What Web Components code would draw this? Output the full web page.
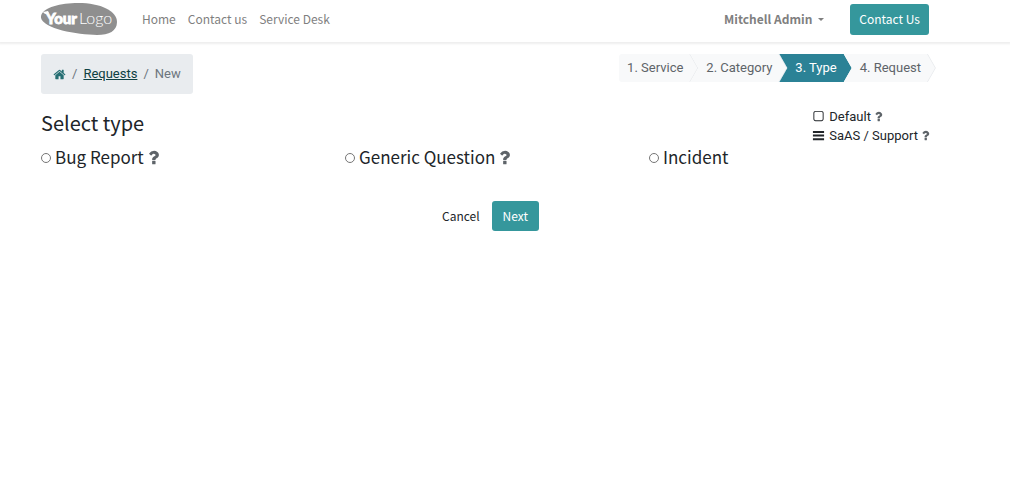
<!DOCTYPE html>
<html lang="en">
<head>
<meta charset="utf-8">
<title>Service Desk</title>
<style>
body{margin:0;background:#fff;color:#212529;font:13px/20px Roboto,sans-serif;--head:"Noto Sans CJK SC","Noto Sans",sans-serif;--teal:#35979c;--muted:#6c757d}
</style>
</head>
<body>
<service-desk></service-desk>
<script>
const define = (name, html, setup) => customElements.define(name, class extends HTMLElement {
  constructor() {
    super();
    const t = document.createElement('template');
    t.innerHTML = html;
    this.attachShadow({mode: 'open'}).append(t.content.cloneNode(true));
  }
  connectedCallback() { if (setup) setup(this, this.shadowRoot); }
});

define('fa-icon', `<style>:host{display:inline-block;width:13px;height:13px}svg{display:block;width:100%;height:100%;fill:currentColor}</style><svg viewBox="0 0 1792 1792" aria-hidden="true"><path/></svg>`, (el, root) => {
  root.querySelector('path').setAttribute('d', {
    question: 'M1088 1256v240q0 16-12 28t-28 12h-240q-16 0-28-12t-12-28v-240q0-16 12-28t28-12h240q16 0 28 12t12 28zm316-600q0 54-15.500 101t-35 76.500-55 59.500-57.500 43.500-61 35.500q-41 23-68.500 65t-27.500 67q0 17-12 32.500t-28 15.500h-240q-15 0-25.500-18.500t-10.500-37.500v-45q0-83 65-156.500t143-108.500q59-27 84-56t25-76q0-42-46.500-74t-107.500-32q-65 0-108 29-35 25-107 115-13 16-31 16-12 0-25-8l-164-125q-13-10-15.500-25t5.500-28q160-266 464-266 80 0 161 31t146 83 106 127.500 41 158.500z',
    home: 'M1472 992v480q0 26-19 45t-45 19h-384v-384h-256v384h-384q-26 0-45-19t-19-45v-480q0-1 .5-3t.5-3l575-474 575 474q1 2 1 6zm223-69l-62 74q-8 9-21 11h-3q-13 0-21-7l-692-577-692 577q-12 8-24 7-13-2-21-11l-62-74q-8-10-7-23.500t11-21.500l719-599q32-26 76-26t76 26l244 204v-195q0-14 9-23t23-9h192q14 0 23 9t9 23v408l219 182q10 8 11 21.500t-7 23.500z',
    square: 'M1312 256h-832q-66 0-113 47t-47 113v832q0 66 47 113t113 47h832q66 0 113-47t47-113v-832q0-66-47-113t-113-47zm288 160v832q0 119-84.500 203.500t-203.500 84.500h-832q-119 0-203.500-84.500t-84.500-203.500v-832q0-119 84.500-203.500t203.500-84.500h832q119 0 203.500 84.500t84.500 203.500z',
    bars: 'M128 270h1536v270h-1536zM128 770h1536v270h-1536zM128 1270h1536v270h-1536z'
  }[el.getAttribute('name')]);
});

define('your-logo', `<style>:host{display:block}svg{display:block;width:76px;height:32px}</style>
<svg viewBox="0 0 76 32" role="img" aria-label="Your Logo"><path d="M0 13C2 4 20 0 37 0C60 0 76 8 76 19C76 28 68 32 56 32C35 32 -2 25 0 13Z" fill="#8f8f8f"/><path d="M2 9l5-1 1 2-4 1z" fill="#fff"/><g fill="#fff" font-family="Lato, sans-serif" font-size="16"><text x="5" y="21" font-size="15" font-weight="900" stroke="#fff" stroke-width=".8">Your</text><text x="38" y="21" font-weight="300">Logo</text></g></svg>`);

define('action-button', `<style>:host{display:block}button{display:block;box-sizing:border-box;height:30px;border:1px solid transparent;border-radius:3px;margin:0;padding:0 10px;background:none;color:#212529;font:12px/20px var(--head);cursor:pointer}:host([primary]) button{background:var(--teal);color:#fff}:host([large]) button{height:31px;padding:0 8px}</style><button type="button"><slot></slot></button>`);

define('site-header', `<style>
:host{display:block;background:#fff;box-shadow:0 1px 2px 1px #00000012;font:12px/20px var(--head)}
header{display:flex;align-items:center;height:32px;padding:3px 81px 7px 41px}
nav{display:flex;gap:12px;margin-left:25px}
a{color:#7f7f7f;text-decoration:none}
.user{display:flex;align-items:center;gap:6px;margin:0 26px 0 auto;padding:0;border:0;background:none;color:#7f7f7f;font:inherit;font-weight:700;cursor:pointer}
.user::after{content:"";border:3px solid transparent;border-top-color:currentColor;border-bottom:0}
</style>
<header><a href="#"><your-logo></your-logo></a><nav><a href="#">Home</a><a href="#">Contact us</a><a href="#">Service Desk</a></nav><button class="user" type="button">Mitchell Admin</button><action-button primary large>Contact Us</action-button></header>`);

define('bread-crumb', `<style>
:host{display:block}
ol{display:flex;align-items:center;gap:6px;height:40px;box-sizing:border-box;margin:0;padding:0 12px;list-style:none;background:#e9ecef;border-radius:3px;color:var(--muted)}
li{display:flex}li+li{gap:6px}li+li::before{content:"/"}
a{color:#0e4043;text-decoration:underline}.home{color:#256e72}fa-icon{display:block}
</style><nav aria-label="Breadcrumb"><ol><li><a class="home" href="#" aria-label="Home"><fa-icon name="home"></fa-icon></a></li><li><a href="#">Requests</a></li><li aria-current="page">New</li></ol></nav>`);

define('wizard-step', `<style>
:host{display:block;position:relative;box-sizing:border-box;height:28px;margin-right:-8px;padding:4px 15px 4px 16px;background:#f8f9fa;color:#5e6469;clip-path:polygon(0 0,calc(100% - 8px) 0,100% 50%,calc(100% - 8px) 100%,0 100%,8px 50%)}
:host([first]){padding-left:8px;border-radius:3px;clip-path:polygon(0 0,calc(100% - 8px) 0,100% 50%,calc(100% - 8px) 100%,0 100%)}
:host([active]){background:#2b8296;color:#fff}
:host::after{content:"";position:absolute;top:0;right:0;width:9px;height:28px;background:#e9ebee;clip-path:polygon(0 0,1px 0,100% 50%,1px 100%,0 100%,8px 50%)}
:host([active])::after{display:none}
</style><slot></slot>`);

define('wizard-steps', `<style>:host{display:flex;margin-right:1px}</style><wizard-step first>1. Service</wizard-step><wizard-step>2. Category</wizard-step><wizard-step active>3. Type</wizard-step><wizard-step>4. Request</wizard-step>`);

define('request-info', `<style>
:host{display:grid;grid-template-columns:auto auto;column-gap:4px;align-items:center;margin-right:-3px;line-height:19px}
span{display:flex;align-items:center;gap:1px}
.q{color:#5e6469}
</style><fa-icon name="square"></fa-icon><span>Default <fa-icon class="q" name="question"></fa-icon></span><fa-icon name="bars"></fa-icon><span>SaAS / Support <fa-icon class="q" name="question"></fa-icon></span>`);

define('type-option', `<style>
:host{display:block;flex:1}
label{display:flex;align-items:center;font:17px/24px var(--head)}
input{appearance:none;box-sizing:border-box;width:10px;height:10px;margin:2px 4px 0 0;border:1px solid #767676;border-radius:50%;background:#fff}
input:checked{border:3px solid var(--teal)}
fa-icon{width:19px;height:19px;color:#5e6469}
</style><label><input type="radio" name="type"><slot></slot><fa-icon name="question"></fa-icon></label>`, (el, root) => {
  if (!el.hasAttribute('help')) root.querySelector('fa-icon').remove();
  root.querySelector('input').addEventListener('change', () => {
    for (const o of el.parentNode.querySelectorAll('type-option')) if (o !== el) o.shadowRoot.querySelector('input').checked = false;
  });
});

define('service-desk', `<style>
:host{display:block}
main{padding:12px 81px 0 41px}
.top{display:flex;justify-content:space-between;align-items:flex-start}
.title{display:flex;justify-content:space-between;align-items:flex-start;margin-top:13px}
h1{margin:3px 0 0;font:400 20px/26px var(--head)}
.types{display:flex;margin:0 -24px 0 0}
.buttons{display:flex;justify-content:center;gap:1px;margin-top:32px}
</style>
<site-header></site-header>
<main>
<div class="top"><bread-crumb></bread-crumb><wizard-steps></wizard-steps></div>
<div class="title"><h1>Select type</h1><request-info></request-info></div>
<form><div class="types"><type-option help>Bug Report</type-option><type-option help>Generic Question</type-option><type-option>Incident</type-option></div>
<div class="buttons"><action-button>Cancel</action-button><action-button primary>Next</action-button></div></form>
</main>`);
</script>
</body>
</html>
